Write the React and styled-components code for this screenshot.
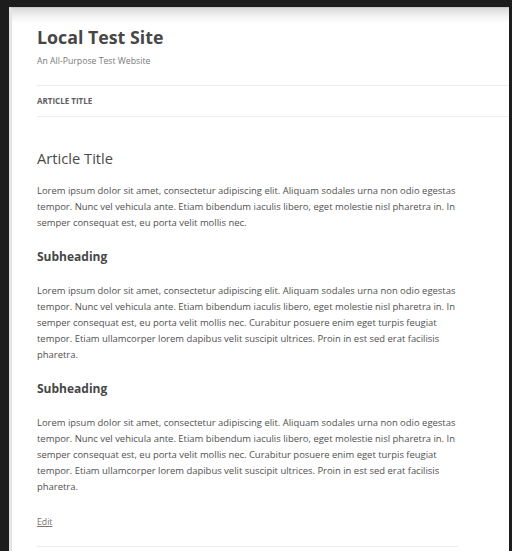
import React from "react";
import styled, { createGlobalStyle } from "styled-components";

const GlobalStyle = createGlobalStyle`
  html, body {
    margin: 0;
    padding: 0;
    height: 100%;
    background: #1d1d1d;
    overflow: hidden;
  }
  #root {
    height: 100%;
  }
`;

const Backdrop = styled.div`
  height: 100%;
  box-sizing: border-box;
  padding: 7px 3px 0 9px;
  display: flex;
`;

const Page = styled.div`
  flex: 1;
  display: flex;
  flex-direction: column;
  border-left: 3px solid #e4e4e4;
  border-top: 1px solid #c9c9c9;
  background: linear-gradient(#dadada 0, #f4f4f4 9px, #fff 16px);
  font-family: "Open Sans", "Liberation Sans", sans-serif;
  color: #4a4a4a;
  padding: 17px 0 0 25px;
`;

const Masthead = styled.header`
  display: flex;
  flex-direction: column;
`;

const SiteTitle = styled.h1`
  margin: 0;
  font-size: 17.8px;
  line-height: 24px;
  font-weight: 700;
  color: #474747;
`;

const Tagline = styled.p`
  margin: 4px 0 0;
  font-size: 8.7px;
  line-height: 16px;
  color: #7a7a7a;
`;

const Nav = styled.nav`
  margin-top: 16px;
  border-top: 1px solid #ededed;
  border-bottom: 1px solid #ededed;
  height: 30px;
  display: flex;
  align-items: center;
`;

const NavItem = styled.a`
  font-size: 8px;
  line-height: 30px;
  font-weight: 700;
  text-transform: uppercase;
  color: #5e5e5e;
  text-decoration: none;
`;

const Article = styled.article`
  width: 421px;
  padding-top: 31px;
  padding-bottom: 16px;
  border-bottom: 1px solid #ededed;
`;

const EntryTitle = styled.h1`
  margin: 0 0 15px;
  font-size: 14.7px;
  line-height: 20px;
  font-weight: 400;
  color: #4a4a4a;
`;

const Paragraph = styled.p`
  margin: 0 0 16px;
  font-size: 9.45px;
  line-height: 16px;
  color: #505050;
`;

const Subheading = styled.h2`
  margin: 16px 0;
  font-size: 12px;
  line-height: 20px;
  font-weight: 700;
  color: #474747;
`;

const EntryFooter = styled.footer`
  margin-top: 16px;
  line-height: 16px;
`;

const EditLink = styled.a`
  font-size: 8.7px;
  color: #757575;
  text-decoration: underline;
`;

const shortText =
  "Lorem ipsum dolor sit amet, consectetur adipiscing elit. Aliquam sodales urna non odio egestas tempor. Nunc vel vehicula ante. Etiam bibendum iaculis libero, eget molestie nisl pharetra in. In semper consequat est, eu porta velit mollis nec.";

const longText =
  shortText +
  " Curabitur posuere enim eget turpis feugiat tempor. Etiam ullamcorper lorem dapibus velit suscipit ultrices. Proin in est sed erat facilisis pharetra.";

export default function App() {
  return (
    <>
      <GlobalStyle />
      <Backdrop>
        <Page>
          <Masthead>
            <SiteTitle>Local Test Site</SiteTitle>
            <Tagline>An All-Purpose Test Website</Tagline>
            <Nav>
              <NavItem href="#">Article Title</NavItem>
            </Nav>
          </Masthead>
          <Article>
            <EntryTitle>Article Title</EntryTitle>
            <Paragraph>{shortText}</Paragraph>
            <Subheading>Subheading</Subheading>
            <Paragraph>{longText}</Paragraph>
            <Subheading>Subheading</Subheading>
            <Paragraph>{longText}</Paragraph>
            <EntryFooter>
              <EditLink href="#">Edit</EditLink>
            </EntryFooter>
          </Article>
        </Page>
      </Backdrop>
    </>
  );
}
